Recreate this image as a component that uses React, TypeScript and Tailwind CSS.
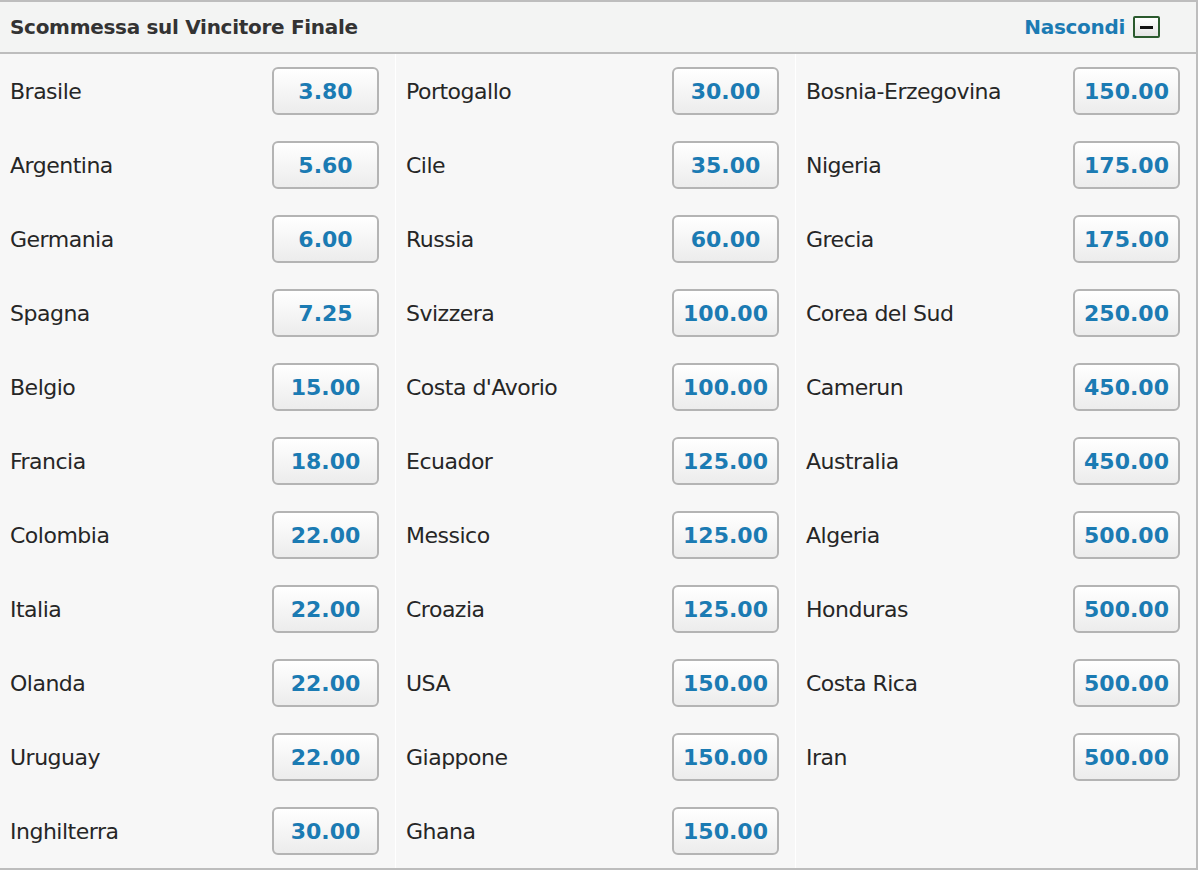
import React from "react";

const col1: [string, string][] = [
  ["Brasile", "3.80"],
  ["Argentina", "5.60"],
  ["Germania", "6.00"],
  ["Spagna", "7.25"],
  ["Belgio", "15.00"],
  ["Francia", "18.00"],
  ["Colombia", "22.00"],
  ["Italia", "22.00"],
  ["Olanda", "22.00"],
  ["Uruguay", "22.00"],
  ["Inghilterra", "30.00"],
];
const col2: [string, string][] = [
  ["Portogallo", "30.00"],
  ["Cile", "35.00"],
  ["Russia", "60.00"],
  ["Svizzera", "100.00"],
  ["Costa d'Avorio", "100.00"],
  ["Ecuador", "125.00"],
  ["Messico", "125.00"],
  ["Croazia", "125.00"],
  ["USA", "150.00"],
  ["Giappone", "150.00"],
  ["Ghana", "150.00"],
];
const col3: [string, string][] = [
  ["Bosnia-Erzegovina", "150.00"],
  ["Nigeria", "175.00"],
  ["Grecia", "175.00"],
  ["Corea del Sud", "250.00"],
  ["Camerun", "450.00"],
  ["Australia", "450.00"],
  ["Algeria", "500.00"],
  ["Honduras", "500.00"],
  ["Costa Rica", "500.00"],
  ["Iran", "500.00"],
];

function Column({ items, className }: { items: [string, string][]; className: string }) {
  return (
    <div className={className}>
      {items.map(([name, odd], i) => (
        <div key={i} className="h-[74px] flex items-center justify-between pl-[10px] pr-[16px]">
          <span className="text-[22px] text-[#262626] tracking-[-0.5px]">{name}</span>
          <button className="w-[107px] h-[48px] rounded-[6px] border-2 border-[#b4b4b4] bg-gradient-to-b from-white to-[#ececec] text-[#1b7bb3] font-bold text-[22px] flex items-center justify-center">
            {odd}
          </button>
        </div>
      ))}
    </div>
  );
}

export default function App() {
  return (
    <div className="w-[1202px] h-[870px] bg-white" style={{ fontFamily: '"DejaVu Sans", Verdana, sans-serif' }}>
      <div className="w-[1198px] border-t-2 border-b-2 border-r-2 border-[#bdbdbd] bg-[#f7f7f7]">
        <div className="h-[52px] bg-[#f3f4f3] border-b-2 border-[#bdbdbd] flex items-center justify-between pl-[10px] pr-[36px]">
          <span className="text-[20px] font-bold text-[#333] tracking-[-0.3px]">Scommessa sul Vincitore Finale</span>
          <div className="flex items-center gap-[8px]">
            <span className="text-[20px] font-bold text-[#1b7bb3] tracking-[-0.3px]">Nascondi</span>
            <div className="w-[27px] h-[22px] border-2 border-[#2b5a2e] rounded-[2px] bg-gradient-to-b from-white to-[#e4e4e4] flex items-center justify-center">
              <div className="w-[13px] h-[3px] bg-[#111]" />
            </div>
          </div>
        </div>
        <div className="flex">
          <Column items={col1} className="w-[396px] border-r border-white" />
          <Column items={col2} className="w-[400px] border-r border-white" />
          <Column items={col3} className="flex-1" />
        </div>
      </div>
    </div>
  );
}
